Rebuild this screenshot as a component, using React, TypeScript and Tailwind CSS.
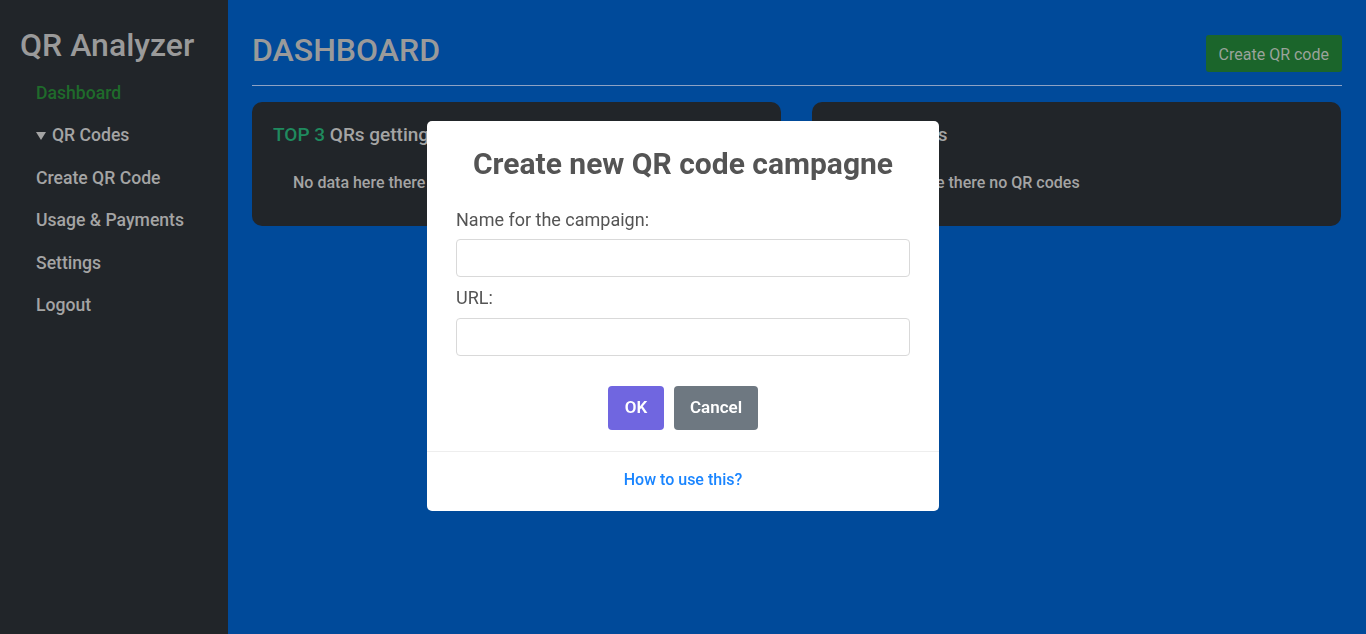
import React from 'react';

const navItems = ['Create QR Code', 'Usage & Payments', 'Settings', 'Logout'];

const Sidebar: React.FC = () => (
  <aside className="w-[228px] shrink-0 bg-[#212529] pt-[25px]">
    <h1 className="pl-[20px] text-[32px] font-medium leading-[40px] text-[#9a9a9a]">QR Analyzer</h1>
    <nav className="mt-[16px] flex flex-col pl-[36px] text-[17.6px] font-medium text-[#a4a4a4]">
      <a className="h-[42.4px] leading-[24px] text-[#1f6b2b]">Dashboard</a>
      <a className="h-[42.4px] leading-[24px] flex items-start">
        <svg width="10" height="8" viewBox="0 0 10 8" className="mr-[6px] mt-[9px]">
          <path d="M0 0h10L5 8z" fill="currentColor" />
        </svg>
        QR Codes
      </a>
      {navItems.map(item => (
        <a key={item} className="h-[42.4px] leading-[24px]">
          {item}
        </a>
      ))}
    </nav>
  </aside>
);

const DashCard: React.FC<{ title: React.ReactNode; text: string }> = ({ title, text }) => (
  <div className="h-[124px] rounded-[10px] bg-[#212529] px-[21px] pt-[21px]">
    <h5 className="text-[19px] font-medium leading-[24px] text-[#a4a4a4] whitespace-nowrap">{title}</h5>
    <p className="mt-[24px] pl-[20px] text-[16px] font-medium leading-[24px] text-[#a4a4a4] whitespace-nowrap">{text}</p>
  </div>
);

// sweetalert-style popup sitting over the dashboard
const Modal: React.FC = () => (
  <div className="fixed inset-0 flex items-start justify-center pt-[121px]">
    <div className="w-[512px] rounded-[5px] bg-white pb-[19px] text-[#545454]">
      <h2 className="pt-[25px] text-center text-[30px] font-bold leading-[35px]">Create new QR code campagne</h2>
      <div className="px-[29px]">
        <label className="mt-[28px] block text-[18px] leading-[22px]">Name for the campaign:</label>
        <input className="mt-[8px] block h-[38px] w-full rounded-[4px] border border-[#d9d9d9] outline-none" />
        <label className="mt-[10px] block text-[18px] leading-[22px]">URL:</label>
        <input className="mt-[9px] block h-[38px] w-full rounded-[4px] border border-[#d9d9d9] outline-none" />
      </div>
      <div className="mt-[30px] flex justify-center gap-[10px]">
        <button className="h-[44px] w-[56px] rounded-[4px] bg-[#7066e0] text-[17px] font-semibold text-white">OK</button>
        <button className="h-[44px] w-[84px] rounded-[4px] bg-[#6e7881] text-[17px] font-semibold text-white">Cancel</button>
      </div>
      <div className="mt-[21px] border-t border-[#eeeeee] pt-[16px] text-center">
        <a className="text-[16px] font-medium leading-[20px] text-[#1a85ff]">How to use this?</a>
      </div>
    </div>
  </div>
);

export default function App() {
  return (
    <div className="flex h-[634px] font-['Roboto',sans-serif]">
      <Sidebar />
      <main className="flex-1 bg-[#004a9a] px-[24px] pt-[35px]">
        <div className="flex items-start justify-between">
          <h1 className="-mt-[1px] text-[32px] font-medium leading-[32px] text-[#9a9a9a]">DASHBOARD</h1>
          <button className="h-[37px] rounded-[3px] bg-[#1b652b] px-[13px] text-[16px] leading-[37px] pt-[1px] text-[#9aa39a]">Create QR code</button>
        </div>
        <hr className="mt-[13px] border-0 h-px bg-[#8da2c4]" />
        <div className="mt-[16px] grid grid-cols-[529px_529px] gap-[31px]">
          <DashCard
            title={
              <>
                <span className="text-[#1f8a5e]">TOP 3</span> QRs getting most scans
              </>
            }
            text="No data here there no QR codes"
          />
          <DashCard title="Your last QRs" text="No data here there no QR codes" />
        </div>
      </main>
      <Modal />
    </div>
  );
}
